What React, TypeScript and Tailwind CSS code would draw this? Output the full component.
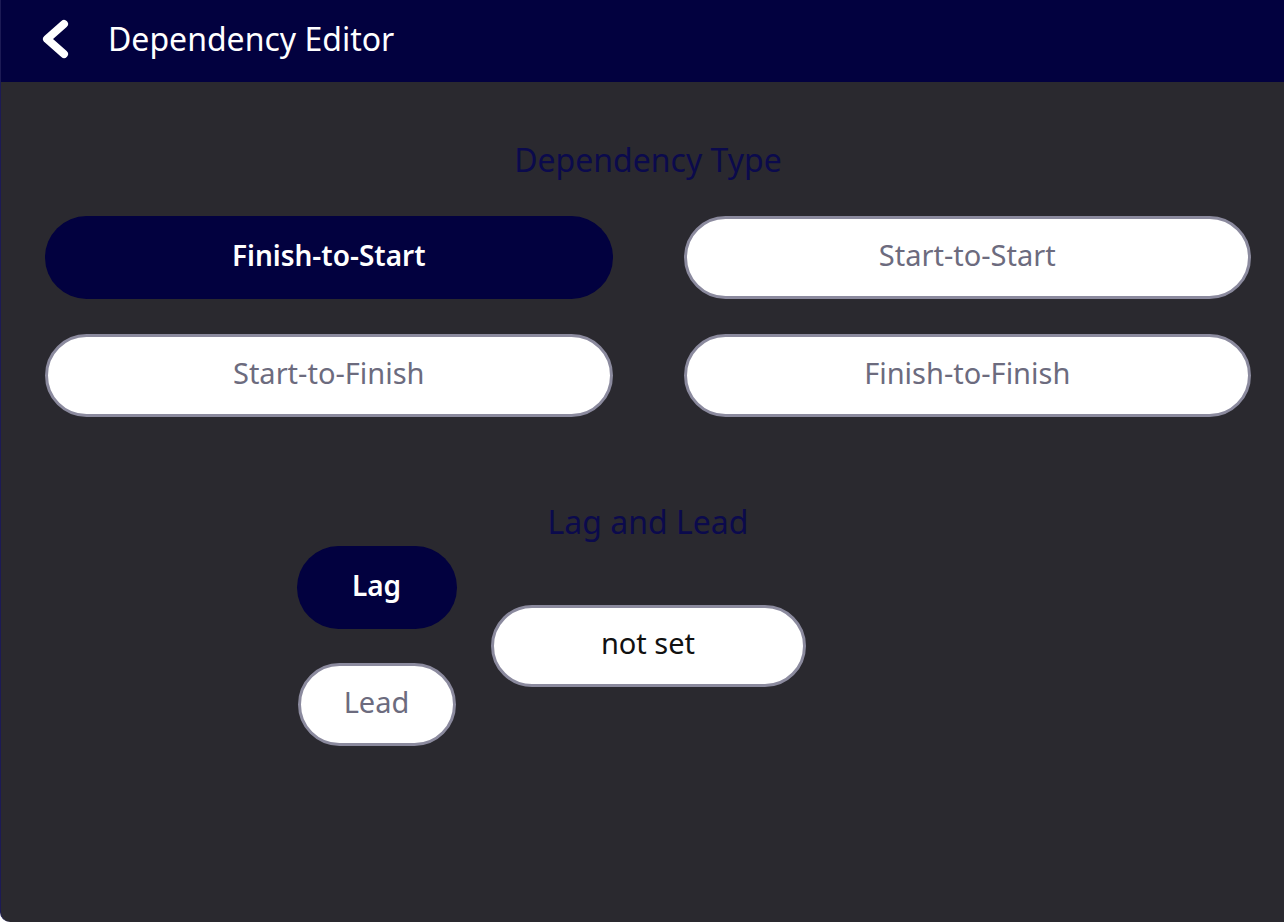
const font = { fontFamily: '"Noto Sans", "Open Sans", sans-serif' };

const types = ['Finish-to-Start', 'Start-to-Start', 'Start-to-Finish', 'Finish-to-Finish'];

function Pill({ label, active, className = '' }: { label: string; active?: boolean; className?: string }) {
  return (
    <button
      className={
        active
          ? `h-[83px] pb-[6px] rounded-full bg-[#02013f] text-white text-[28px] font-semibold ${className}`
          : `h-[83px] pb-[6px] rounded-full bg-white border-[3px] border-[#8b8a9e] text-[#6c6b7e] text-[29px] ${className}`
      }
    >
      {label}
    </button>
  );
}

export default function App() {
  return (
    <div className="w-[1284px] h-[922px] flex flex-col bg-[#2a292f] border-l border-[#1c1a55] rounded-bl-[10px] overflow-hidden" style={font}>
      <header className="h-[82px] shrink-0 bg-[#02013f] flex items-center pb-[5px]">
        <svg className="ml-[39px]" width="30" height="40" viewBox="0 0 30 40">
          <polyline points="24,5 7,20 24,35" fill="none" stroke="white" strokeWidth="8" strokeLinecap="round" strokeLinejoin="round" />
        </svg>
        <h1 className="ml-[38px] text-white text-[32px] leading-none">Dependency Editor</h1>
      </header>

      <main className="flex-1 pl-[44px] pr-[33px]">
        <h2 className="mt-[58px] h-[40px] flex items-center justify-center text-[32px] text-[#0b0a4c]">Dependency Type</h2>
        <div className="mt-[36px] grid grid-cols-2 gap-x-[71px] gap-y-[35px]">
          {types.map((t, i) => (
            <Pill key={t} label={t} active={i === 0} />
          ))}
        </div>

        <h2 className="mt-[85px] h-[40px] flex items-center justify-center text-[32px] text-[#0b0a4c]">Lag and Lead</h2>
        <div className="mt-[4px] grid grid-cols-[1fr_auto_1fr] items-center">
          <div className="flex flex-col items-end gap-[34px] pr-[34px]">
            <Pill label="Lag" active className="w-[160px]" />
            <Pill label="Lead" className="w-[158px] mr-[1px]" />
          </div>
          <button className="w-[315px] h-[82px] pb-[6px] rounded-full bg-white border-[3px] border-[#8b8a9e] text-[#111] text-[29px]">
            not set
          </button>
          <div />
        </div>
      </main>
    </div>
  );
}
